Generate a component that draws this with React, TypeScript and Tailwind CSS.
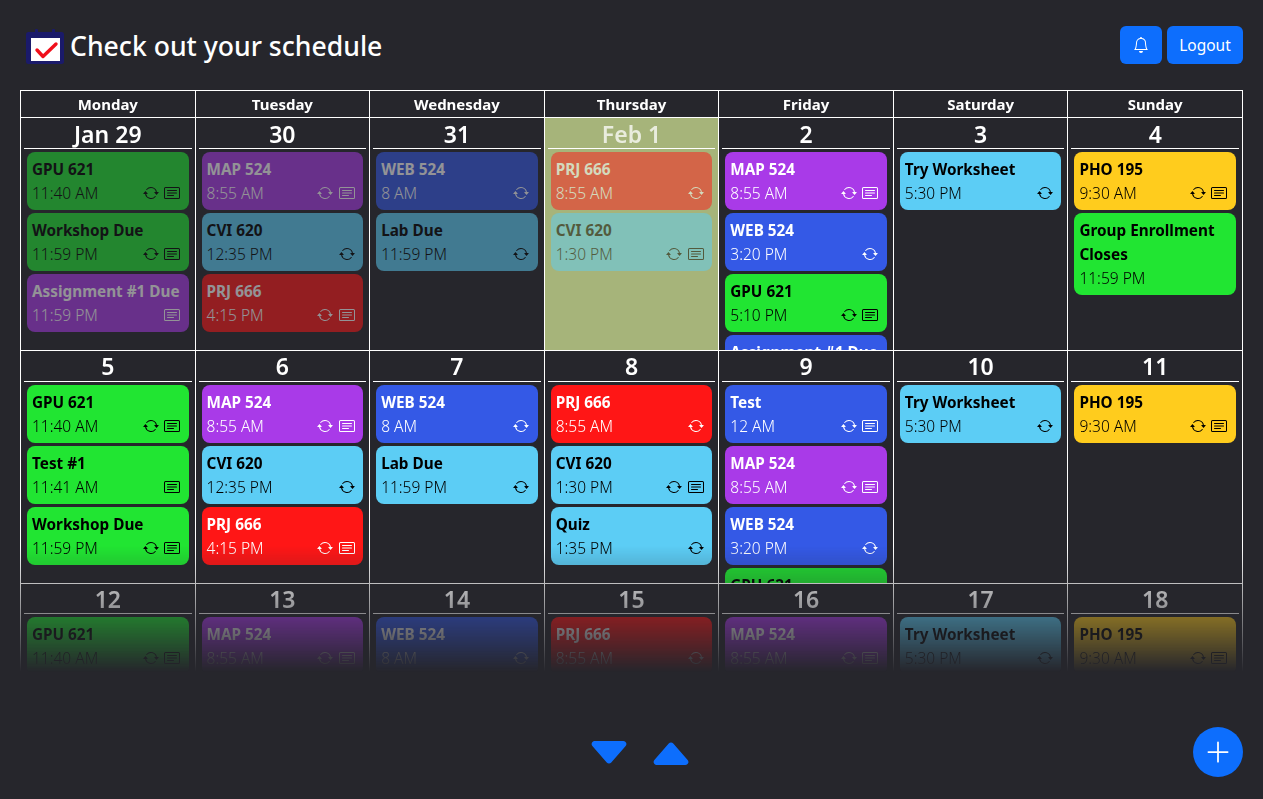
import { BsArrowRepeat, BsBell, BsCardText, BsCaretDownFill, BsCaretUpFill, BsPlusLg } from "react-icons/bs";

type Color = "green" | "purple" | "blue" | "red" | "cyan" | "yellow";

type Item = {
  title: string;
  time: string;
  color: Color;
  repeat?: boolean;
  note?: boolean;
};

type Day = {
  label: string;
  items: Item[];
  past?: boolean;
  today?: boolean;
};

const colors: Record<Color, string> = {
  green: "bg-[#21e532] text-black",
  purple: "bg-[#a93ae8] text-white",
  blue: "bg-[#3459e6] text-white",
  red: "bg-[#ff1616] text-white",
  cyan: "bg-[#5ccdf5] text-black",
  yellow: "bg-[#ffcc1d] text-black",
};

const weekdays = ["Monday", "Tuesday", "Wednesday", "Thursday", "Friday", "Saturday", "Sunday"];

const gpu = (time = "11:40 AM"): Item => ({ title: "GPU 621", time, color: "green", repeat: true, note: true });
const map: Item = { title: "MAP 524", time: "8:55 AM", color: "purple", repeat: true, note: true };
const cvi: Item = { title: "CVI 620", time: "12:35 PM", color: "cyan", repeat: true };
const cviNote: Item = { title: "CVI 620", time: "1:30 PM", color: "cyan", repeat: true, note: true };
const prj: Item = { title: "PRJ 666", time: "8:55 AM", color: "red", repeat: true };
const prjNote: Item = { title: "PRJ 666", time: "4:15 PM", color: "red", repeat: true, note: true };
const web = (time: string): Item => ({ title: "WEB 524", time, color: "blue", repeat: true });
const lab: Item = { title: "Lab Due", time: "11:59 PM", color: "cyan", repeat: true };
const workshop: Item = { title: "Workshop Due", time: "11:59 PM", color: "green", repeat: true, note: true };
const worksheet: Item = { title: "Try Worksheet", time: "5:30 PM", color: "cyan", repeat: true };
const pho: Item = { title: "PHO 195", time: "9:30 AM", color: "yellow", repeat: true, note: true };

const days: Day[] = [
  { label: "Jan 29", past: true, items: [gpu(), workshop, { title: "Assignment #1 Due", time: "11:59 PM", color: "purple", note: true }] },
  { label: "30", past: true, items: [map, cvi, prjNote] },
  { label: "31", past: true, items: [web("8 AM"), lab] },
  { label: "Feb 1", past: true, today: true, items: [prj, cviNote] },
  { label: "2", items: [map, web("3:20 PM"), gpu("5:10 PM"), { title: "Assignment #1 Due", time: "11:59 PM", color: "blue", note: true }] },
  { label: "3", items: [worksheet] },
  { label: "4", items: [pho, { title: "Group Enrollment Closes", time: "11:59 PM", color: "green" }] },
  { label: "5", items: [gpu(), { title: "Test #1", time: "11:41 AM", color: "green", note: true }, workshop] },
  { label: "6", items: [map, cvi, prjNote] },
  { label: "7", items: [web("8 AM"), lab] },
  { label: "8", items: [prj, cviNote, { title: "Quiz", time: "1:35 PM", color: "cyan", repeat: true }] },
  { label: "9", items: [{ title: "Test", time: "12 AM", color: "blue", repeat: true, note: true }, map, web("3:20 PM"), gpu("5:10 PM")] },
  { label: "10", items: [worksheet] },
  { label: "11", items: [pho] },
  { label: "12", items: [gpu()] },
  { label: "13", items: [map] },
  { label: "14", items: [web("8 AM")] },
  { label: "15", items: [prj] },
  { label: "16", items: [map] },
  { label: "17", items: [worksheet] },
  { label: "18", items: [pho] },
];

function Logo() {
  return (
    <svg width="38" height="35" viewBox="0 0 38 35" className="shrink-0">
      <rect x="0" y="3" width="38" height="32" rx="2.5" fill="#1a1a6a" />
      <rect x="9" y="0" width="3" height="6" rx="1" fill="#1a1a6a" />
      <rect x="26" y="0" width="3" height="6" rx="1" fill="#1a1a6a" />
      <rect x="5" y="9" width="29" height="23" fill="#fff" />
      <path d="M11 21l6 6.5L30 15" fill="none" stroke="#f0101c" strokeWidth="3.4" strokeLinecap="round" strokeLinejoin="round" />
    </svg>
  );
}

function EventCard({ item, dim }: { item: Item; dim?: boolean }) {
  return (
    <div className={`mb-[3px] w-full rounded-lg py-[5px] pl-[5px] pr-[8.5px] text-[15.5px] leading-6 ${colors[item.color]} ${dim ? "opacity-50" : ""}`}>
      <div className="text-[15.3px] font-bold">{item.title}</div>
      <div className="flex items-center justify-between">
        <span className="font-light">{item.time}</span>
        <span className="flex items-center gap-[5.5px]">
          {item.repeat && <BsArrowRepeat size={16} />}
          {item.note && <BsCardText size={16} />}
        </span>
      </div>
    </div>
  );
}

function DayCell({ day }: { day: Day }) {
  return (
    <div className={`overflow-hidden border-l border-t border-white px-[3px] [&:nth-child(-n+7)]:pt-px ${day.today ? "bg-[#a6b47a]" : ""}`}>
      <div className={`h-[30.1px] border-b border-white text-center text-[23px] font-semibold leading-[31px] ${day.today ? "text-white/75" : "text-white"}`}>
        {day.label}
      </div>
      <div className="px-[3px] pt-[3px]">
        {day.items.map((item, i) => (
          <EventCard key={i} item={item} dim={day.past} />
        ))}
      </div>
    </div>
  );
}

export default function App() {
  return (
    <div className="relative flex h-[799px] flex-col overflow-hidden bg-[#26262c] font-['Noto_Sans',sans-serif] text-white">
      {/* Header */}
      <header className="flex h-[90px] items-start justify-between pl-[26px] pr-5 pt-[26px]">
        <div className="flex items-center gap-[6px]">
          <Logo />
          <h1 className="text-[26.6px] font-medium leading-[40px]">Check out your schedule</h1>
        </div>
        <div className="flex gap-[5px]">
          <button className="flex h-[38px] w-[42px] items-center justify-center rounded-md bg-[#0d6efd]">
            <BsBell size={16} />
          </button>
          <button className="h-[38px] w-[76px] rounded-md bg-[#0d6efd] pt-[2px] text-[15.5px]">Logout</button>
        </div>
      </header>

      {/* Calendar */}
      <div className="mx-5 h-[582px] overflow-hidden [mask-image:linear-gradient(to_bottom,black_456px,transparent_582px)]">
        <div className="grid grid-cols-7 border-r border-white">
          {weekdays.map((name) => (
            <div key={name} className="h-[27.2px] border-l border-t border-white text-center text-[15px] font-bold leading-[26px]">
              {name}
            </div>
          ))}
        </div>
        <div className="grid grid-cols-7 grid-rows-[233.25px_232.25px_232.25px] border-r border-white">
          {days.map((day) => (
            <DayCell key={day.label} day={day} />
          ))}
        </div>
      </div>

      {/* Footer controls */}
      <div className="flex justify-center gap-[14px] pl-[17px] pt-[57px] text-[#0d6efd]">
        <button>
          <BsCaretDownFill size={48} />
        </button>
        <button>
          <BsCaretUpFill size={48} />
        </button>
      </div>
      <button className="absolute bottom-[22px] right-5 flex h-[50px] w-[50px] items-center justify-center rounded-full bg-[#0d6efd]">
        <BsPlusLg size={28} />
      </button>
    </div>
  );
}
